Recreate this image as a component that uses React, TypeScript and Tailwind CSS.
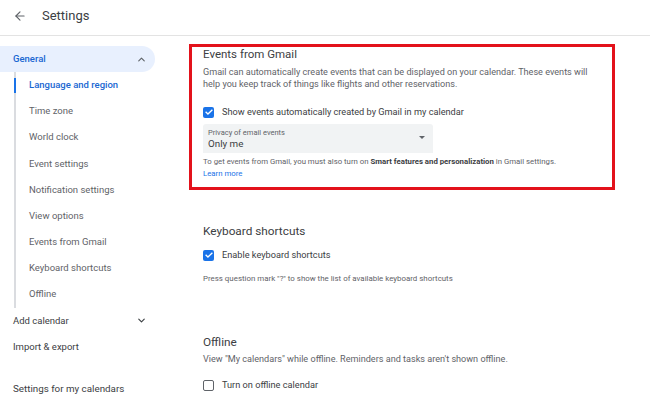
import React from "react";
import { ArrowLeft, ChevronUp, ChevronDown } from "lucide-react";

function CheckBox({ checked }: { checked: boolean }) {
  if (checked) {
    return (
      <span className="flex h-[11px] w-[11px] shrink-0 items-center justify-center rounded-[2px] bg-[#1a73e8]">
        <svg viewBox="0 0 24 24" className="h-[10px] w-[10px]" fill="none" stroke="white" strokeWidth="3.2" strokeLinecap="square">
          <path d="M5 12.5l4.5 4.5L19 7.5" />
        </svg>
      </span>
    );
  }
  return <span className="h-[11px] w-[11px] shrink-0 rounded-[2px] border-[1.5px] border-[#5f6368]" />;
}

const subItems = [
  "Language and region",
  "Time zone",
  "World clock",
  "Event settings",
  "Notification settings",
  "View options",
  "Events from Gmail",
  "Keyboard shortcuts",
  "Offline",
];

export default function App() {
  return (
    <div className="h-[401px] w-[650px] overflow-hidden bg-white text-[#3c4043]" style={{ fontFamily: "Roboto, 'Liberation Sans', sans-serif" }}>
      <header className="flex h-[36px] items-center border-b border-[#e3e3e3] pb-[4px]">
        <ArrowLeft className="ml-[13px] h-[14px] w-[14px] text-[#5f6368]" strokeWidth={2} />
        <span className="ml-[15px] text-[13px] text-[#3c4043]">Settings</span>
      </header>
      <div className="flex">
        <nav className="w-[189px] shrink-0 pt-[10px]">
          <div className="flex h-[26px] w-[155px] items-center justify-between rounded-r-full bg-[#e8f0fe] pl-[13px] pr-[8px] text-[9.5px] font-medium text-[#1967d2]">
            <span>General</span>
            <ChevronUp className="h-[11px] w-[11px] text-[#5f6368]" strokeWidth={2.5} />
          </div>
          <div className="ml-[14px] border-l-2 border-[#dadce0]">
            {subItems.map((s, i) => (
              <div key={s} className={`relative flex h-[26.2px] items-center pl-[13px] text-[9.5px] ${i === 0 ? "font-medium text-[#1967d2]" : "text-[#5f6368]"}`}>
                {i === 0 && <span className="absolute -left-[2px] top-[6px] h-[15px] w-[2px] bg-[#1a73e8]" />}
                {s}
              </div>
            ))}
          </div>
          <div className="flex h-[26.2px] w-[155px] items-center justify-between pl-[13px] pr-[8px] text-[9.5px] text-[#3c4043]">
            <span>Add calendar</span>
            <ChevronDown className="h-[11px] w-[11px] text-[#3c4043]" strokeWidth={2.5} />
          </div>
          <div className="flex h-[26.2px] items-center pl-[13px] text-[9.5px] text-[#3c4043]">Import &amp; export</div>
          <div className="mt-[16px] flex h-[26px] items-center pl-[13px] text-[9.8px] text-[#3c4043]">Settings for my calendars</div>
        </nav>
        <main className="w-[426px] pt-[8px]">
          <section className="border-[3px] border-[#e3121b] pb-[7px] pl-[11px]">
            <h2 className="text-[11.5px] leading-[14px] text-[#3c4043]">Events from Gmail</h2>
            <p className="mt-[5px] pr-[8px] text-[9.1px] leading-[12px] text-[#5f6368]">
              Gmail can automatically create events that can be displayed on your calendar. These events will help you keep track of things like flights and other reservations.
            </p>
            <label className="mt-[15px] flex h-[14px] items-center gap-[8px] text-[9.2px] text-[#3c4043]">
              <CheckBox checked />
              <span>Show events automatically created by Gmail in my calendar</span>
            </label>
            <div className="mt-[5px] flex h-[29px] w-[230px] items-center justify-between rounded-t-[3px] bg-[#f1f3f4] pl-[5px] pr-[8px]">
              <div className="flex flex-col">
                <span className="text-[7.5px] leading-[10px] text-[#5f6368]">Privacy of email events</span>
                <span className="text-[9.8px] leading-[12px] text-[#3c4043]">Only me</span>
              </div>
              <svg viewBox="0 0 10 5" className="mb-[2px] h-[3px] w-[6px]" fill="#5f6368"><path d="M0 0h10L5 5z" /></svg>
            </div>
            <p className="mt-[3px] text-[7.8px] leading-[12px] text-[#5f6368]">
              To get events from Gmail, you must also turn on <b className="font-bold text-[#3c4043]">Smart features and personalization</b> in Gmail settings.
            </p>
            <p className="text-[7.8px] leading-[12px] text-[#1a73e8]">Learn more</p>
          </section>
          <section className="pl-[14px]">
            <h2 className="mt-[34px] text-[11.8px] leading-[14px] text-[#3c4043]">Keyboard shortcuts</h2>
            <label className="mt-[10px] flex h-[14px] items-center gap-[8px] text-[9.2px] text-[#3c4043]">
              <CheckBox checked />
              <span>Enable keyboard shortcuts</span>
            </label>
            <p className="mt-[11px] text-[7.9px] leading-[12px] text-[#5f6368]">
              Press question mark "?" to show the list of available keyboard shortcuts
            </p>
            <h2 className="mt-[50px] text-[11.8px] leading-[14px] text-[#3c4043]">Offline</h2>
            <p className="mt-[4px] text-[9.1px] leading-[12px] text-[#5f6368]">
              View "My calendars" while offline. Reminders and tasks aren't shown offline.
            </p>
            <label className="mt-[13px] flex h-[14px] items-center gap-[8px] text-[9.2px] text-[#3c4043]">
              <CheckBox checked={false} />
              <span>Turn on offline calendar</span>
            </label>
          </section>
        </main>
      </div>
    </div>
  );
}
